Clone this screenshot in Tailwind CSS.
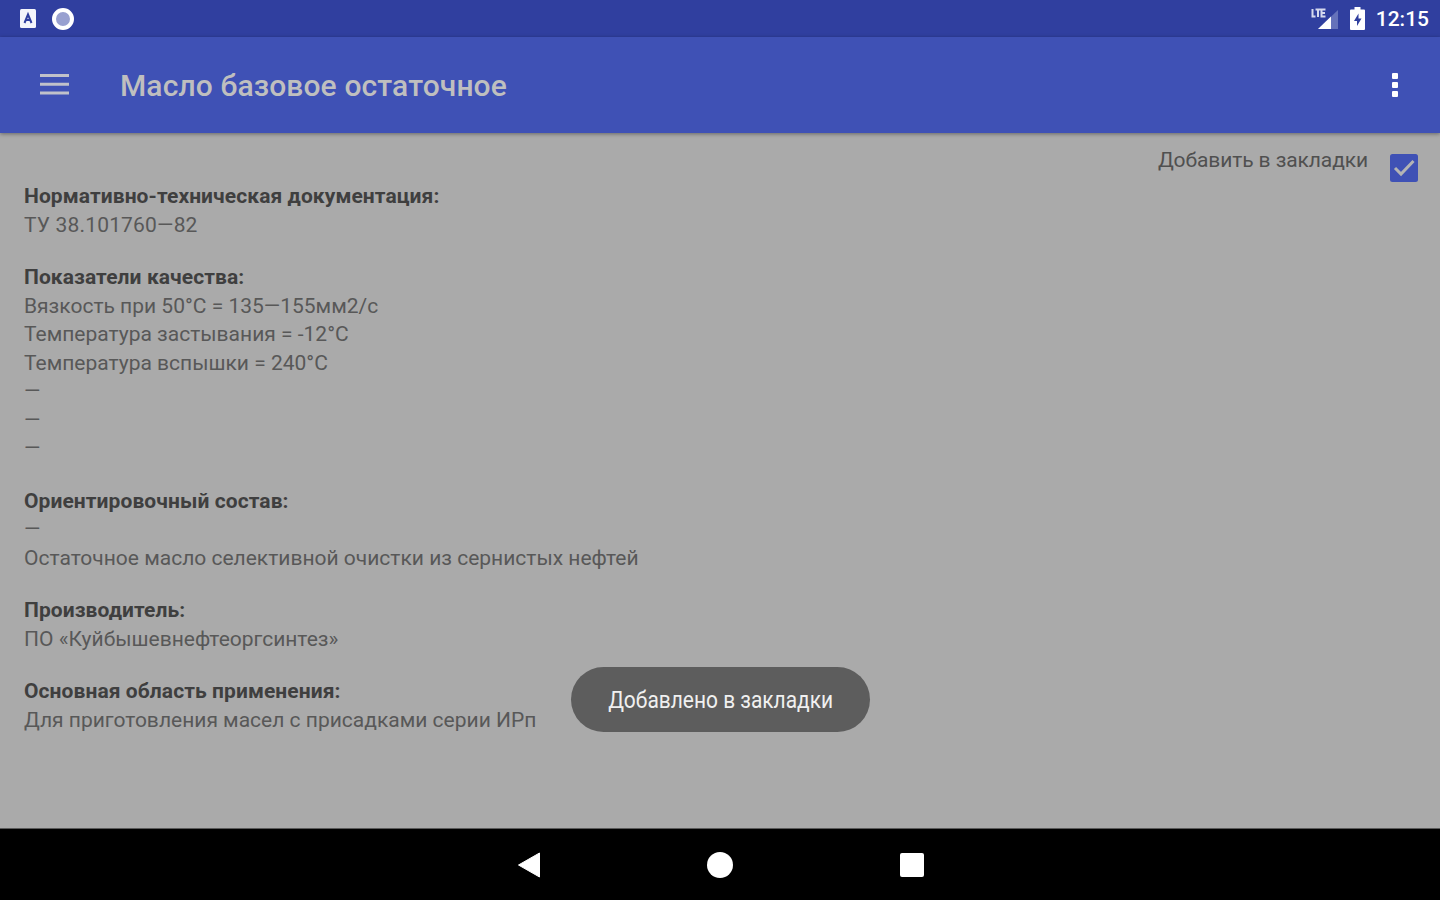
<!DOCTYPE html>
<html lang="ru">
  <head>
    <meta charset="UTF-8" />
    <meta name="viewport" content="width=device-width, initial-scale=1.0" />
    <title>Масло базовое остаточное</title>
    <script src="https://cdn.jsdelivr.net/npm/@tailwindcss/browser@4"></script>
  </head>
  <body>
    <div class="relative flex flex-col h-screen overflow-hidden bg-[#aaaaaa] font-[Roboto,sans-serif]">
      <!-- status bar -->
      <div class="flex items-center h-[37px] shrink-0 bg-[#303f9f] pl-5 pr-[11px] text-white">
        <svg class="w-4 h-[19px]" viewBox="0 0 16 19" fill="none">
          <rect width="16" height="19" rx="1.5" fill="#f4f5fb" />
          <path d="M4.500 14L8 5.500 11.500 14M6 11h4" stroke="#303f9f" stroke-width="2" />
        </svg>
        <svg class="w-6 h-6 ml-[15px]" viewBox="0 0 24 24">
          <circle cx="12" cy="12" r="9" fill="#98a0d0" stroke="#fff" stroke-width="4" />
        </svg>
        <div class="flex items-center ml-auto">
          <svg class="w-[28px] h-[24px]" viewBox="0 0 28 24">
            <path d="M27 3v19H7z" fill="#6572ba" />
            <path d="M20 9.500V22H7z" fill="#fff" />
            <rect width="16" height="12" fill="#303f9f" />
            <path d="M1.500 2v7.500h3M4.500 2.500h5M7 2.500V10M14.500 2.500h-4v7h4M10.500 6h3.500" fill="none" stroke="#d5d9ee" stroke-width="2" />
          </svg>
          <svg class="w-[15px] h-[24px] ml-[11px]" viewBox="0 0 15 24">
            <path d="M4.500 0h6v2.500H14a1 1 0 0 1 1 1V22a1 1 0 0 1-1 1H1a1 1 0 0 1-1-1V3.500a1 1 0 0 1 1-1h3.500z" fill="#fff" />
            <path d="M8.500 6.500L4 14h3v5l4.500-7.500h-3z" fill="#303f9f" />
          </svg>
          <span class="ml-[11px] text-[21px] leading-6 font-medium">12:15</span>
        </div>
      </div>

      <!-- toolbar -->
      <div class="flex items-center h-24 shrink-0 bg-[#3f51b5] pl-10 pr-[42px] shadow-[0_1px_4px_rgba(0,0,0,0.4)]">
        <button type="button" class="-mt-0.5">
          <svg class="w-[29px] h-[21px]" viewBox="0 0 29 21" fill="#c0c1ca">
            <path d="M0 0h29v3H0zM0 8.700h29v3H0zM0 17.400h29v3H0z" />
          </svg>
        </button>
        <h1 class="ml-[51px] mt-0.5 text-[30px] leading-9 font-medium tracking-[0.12px] text-[#bfbfbf]">Масло базовое остаточное</h1>
        <button type="button" class="flex flex-col gap-[3px] ml-auto">
          <span class="w-1.5 h-1.5 rounded-[1px] bg-white"></span>
          <span class="w-1.5 h-1.5 rounded-[1px] bg-white"></span>
          <span class="w-1.5 h-1.5 rounded-[1px] bg-white"></span>
        </button>
      </div>

      <!-- content -->
      <div class="grow text-[21px] leading-[28.5px] text-[#585858]">
        <label class="flex justify-end items-start h-[49px] pr-[22px] pt-[13px]">
          <span class="tracking-[-0.1px] text-[#505050]">Добавить в закладки</span>
          <svg class="w-7 h-7 ml-[22px] mt-2" viewBox="0 0 28 28" fill="none">
            <rect width="28" height="28" rx="2.5" fill="#3f51b5" />
            <path d="M5 14l6 6L23.500 7" stroke="#b4b4b4" stroke-width="3" />
          </svg>
        </label>
        <div class="flex flex-col gap-6 pl-6">
          <div>
            <h2 class="font-bold tracking-[0.08px] text-[#3f3f3f]">Нормативно-техническая документация:</h2>
            <p class="tracking-[0.18px]">ТУ 38.101760—82</p>
          </div>
          <div>
            <h2 class="font-bold tracking-[0.08px] text-[#3f3f3f]">Показатели качества:</h2>
            <p>Вязкость при 50°С = 135—155мм2/с</p>
            <p>Температура застывания = -12°С</p>
            <p>Температура вспышки = 240°С</p>
            <p>—</p>
            <p>—</p>
            <p>—</p>
          </div>
          <div>
            <h2 class="font-bold tracking-[0.08px] text-[#3f3f3f]">Ориентировочный состав:</h2>
            <p>—</p>
            <p>Остаточное масло селективной очистки из сернистых нефтей</p>
          </div>
          <div>
            <h2 class="font-bold tracking-[0.08px] text-[#3f3f3f]">Производитель:</h2>
            <p>ПО «Куйбышевнефтеоргсинтез»</p>
          </div>
          <div>
            <h2 class="font-bold tracking-[0.08px] text-[#3f3f3f]">Основная область применения:</h2>
            <p>Для приготовления масел с присадками серии ИРп</p>
          </div>
        </div>
      </div>

      <!-- toast -->
      <div class="absolute left-[571px] top-[667px] flex items-center justify-center w-[299px] h-[65px] rounded-full bg-[#5d5d5d]">
        <span class="mt-1 text-[23px] text-[#f0f0f0] whitespace-nowrap scale-x-[0.91]">Добавлено в закладки</span>
      </div>

      <!-- navigation bar -->
      <div class="flex items-center justify-center h-[72px] shrink-0 bg-black border-t border-[#5a5a5a]">
        <svg class="w-6 h-[26px]" viewBox="0 0 24 26">
          <path d="M22.500 1v24L1.500 13z" fill="#fff" stroke="#fff" stroke-linejoin="round" />
        </svg>
        <span class="w-[26px] h-[26px] ml-[166px] rounded-full bg-white"></span>
        <span class="w-6 h-6 ml-[167px] rounded-[2px] bg-white"></span>
      </div>
    </div>
  </body>
</html>
